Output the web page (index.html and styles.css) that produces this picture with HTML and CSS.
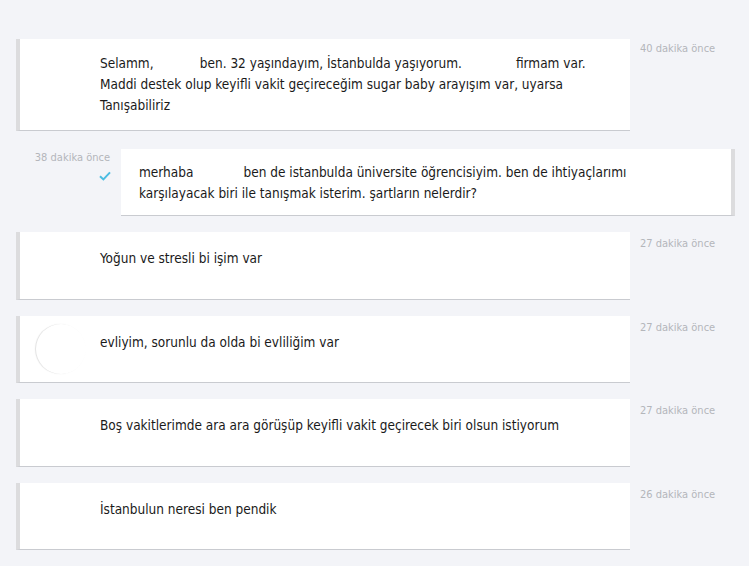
FILE: index.html
```html
<!DOCTYPE html>
<html lang="tr">
<head>
<meta charset="utf-8">
<title>Mesajlar</title>
<link rel="stylesheet" href="styles.css">
</head>
<body>
<div class="thread">
  <div class="row in multi">
    <div class="card"><div class="avatar"></div><p class="text">Selamm,&nbsp;&nbsp;&nbsp;&nbsp;&nbsp;&nbsp;&nbsp;&nbsp;&nbsp;&nbsp;&nbsp; ben. 32 yaşındayım, İstanbulda yaşıyorum.&nbsp;&nbsp;&nbsp;&nbsp;&nbsp;&nbsp;&nbsp;&nbsp;&nbsp;&nbsp;&nbsp;&nbsp;&nbsp; firmam var. Maddi destek olup keyifli vakit geçireceğim sugar baby arayışım var, uyarsa Tanışabiliriz</p></div>
    <div class="time">40 dakika önce</div>
  </div>
  <div class="row out">
    <div class="meta">
      <div class="time">38 dakika önce</div>
      <svg class="check" width="12" height="10" viewBox="0 0 12 10"><path d="M1 5.2 L4.4 8.4 L11 1.4" fill="none" stroke="#4cbde2" stroke-width="2"/></svg>
    </div>
    <div class="card"><p class="text">merhaba&nbsp;&nbsp;&nbsp;&nbsp;&nbsp;&nbsp;&nbsp;&nbsp;&nbsp;&nbsp;&nbsp;&nbsp; ben de istanbulda üniversite öğrencisiyim. ben de ihtiyaçlarımı karşılayacak biri ile tanışmak isterim. şartların nelerdir?</p></div>
  </div>
  <div class="row in single">
    <div class="card"><div class="avatar"></div><p class="text">Yoğun ve stresli bi işim var</p></div>
    <div class="time">27 dakika önce</div>
  </div>
  <div class="row in single">
    <div class="card"><div class="avatar edge"></div><p class="text">evliyim, sorunlu da olda bi evliliğim var</p></div>
    <div class="time">27 dakika önce</div>
  </div>
  <div class="row in single">
    <div class="card"><div class="avatar"></div><p class="text">Boş vakitlerimde ara ara görüşüp keyifli vakit geçirecek biri olsun istiyorum</p></div>
    <div class="time">27 dakika önce</div>
  </div>
  <div class="row in single">
    <div class="card"><div class="avatar"></div><p class="text">İstanbulun neresi ben pendik</p></div>
    <div class="time">26 dakika önce</div>
  </div>
</div>
</body>
</html>
```

FILE: styles.css
```css
html, body {
  margin: 0;
  padding: 0;
  background: #f3f4f8;
  height: 100%;
}
body {
  font-family: "DejaVu Sans Condensed", "DejaVu Sans", Tahoma, sans-serif;
  color: #1a1a1a;
}
.thread {
  display: flex;
  flex-direction: column;
  gap: 16px;
  padding-top: 39px;
}
.row {
  display: flex;
  align-items: flex-start;
}
.row.in {
  padding-left: 16px;
}
.row.out {
  margin-top: 2px;
}
.card {
  box-sizing: border-box;
  width: 614px;
  min-height: 67.4px;
  background: #fff;
  border-bottom: 1px solid #c9cbd0;
  display: flex;
  align-items: flex-start;
}
.row.in .card {
  border-left: 4px solid #dcdcde;
  padding: 14px 30px 14px 16px;
}
.row.in.single .card {
  padding-top: 16px;
}
.row.out .card {
  border-right: 4px solid #dcdcde;
  padding: 13px 90px 11px 18px;
}
.avatar {
  flex: none;
  width: 50px;
  height: 40px;
  margin-top: -4px;
  margin-right: 14px;
  border-radius: 50%;
  background: #fff;
}
.avatar.edge {
  height: 50px;
  margin-top: -8px;
  margin-bottom: -10px;
  box-shadow: -1px 0 1px rgba(0,0,0,0.12);
}
.text {
  margin: 0;
  font-size: 13.5px;
  line-height: 21px;
}
.time {
  font-size: 11px;
  color: #b4b6bb;
  line-height: 14px;
}
.row.in .time {
  margin-left: 10px;
  margin-top: 3px;
}
.row.in.single .time {
  margin-top: 5px;
}
.meta {
  width: 110px;
  flex: none;
  margin-right: 11px;
  margin-top: 2px;
  display: flex;
  flex-direction: column;
  align-items: flex-end;
}
.check {
  margin-top: 6px;
  margin-right: -1px;
}
```
